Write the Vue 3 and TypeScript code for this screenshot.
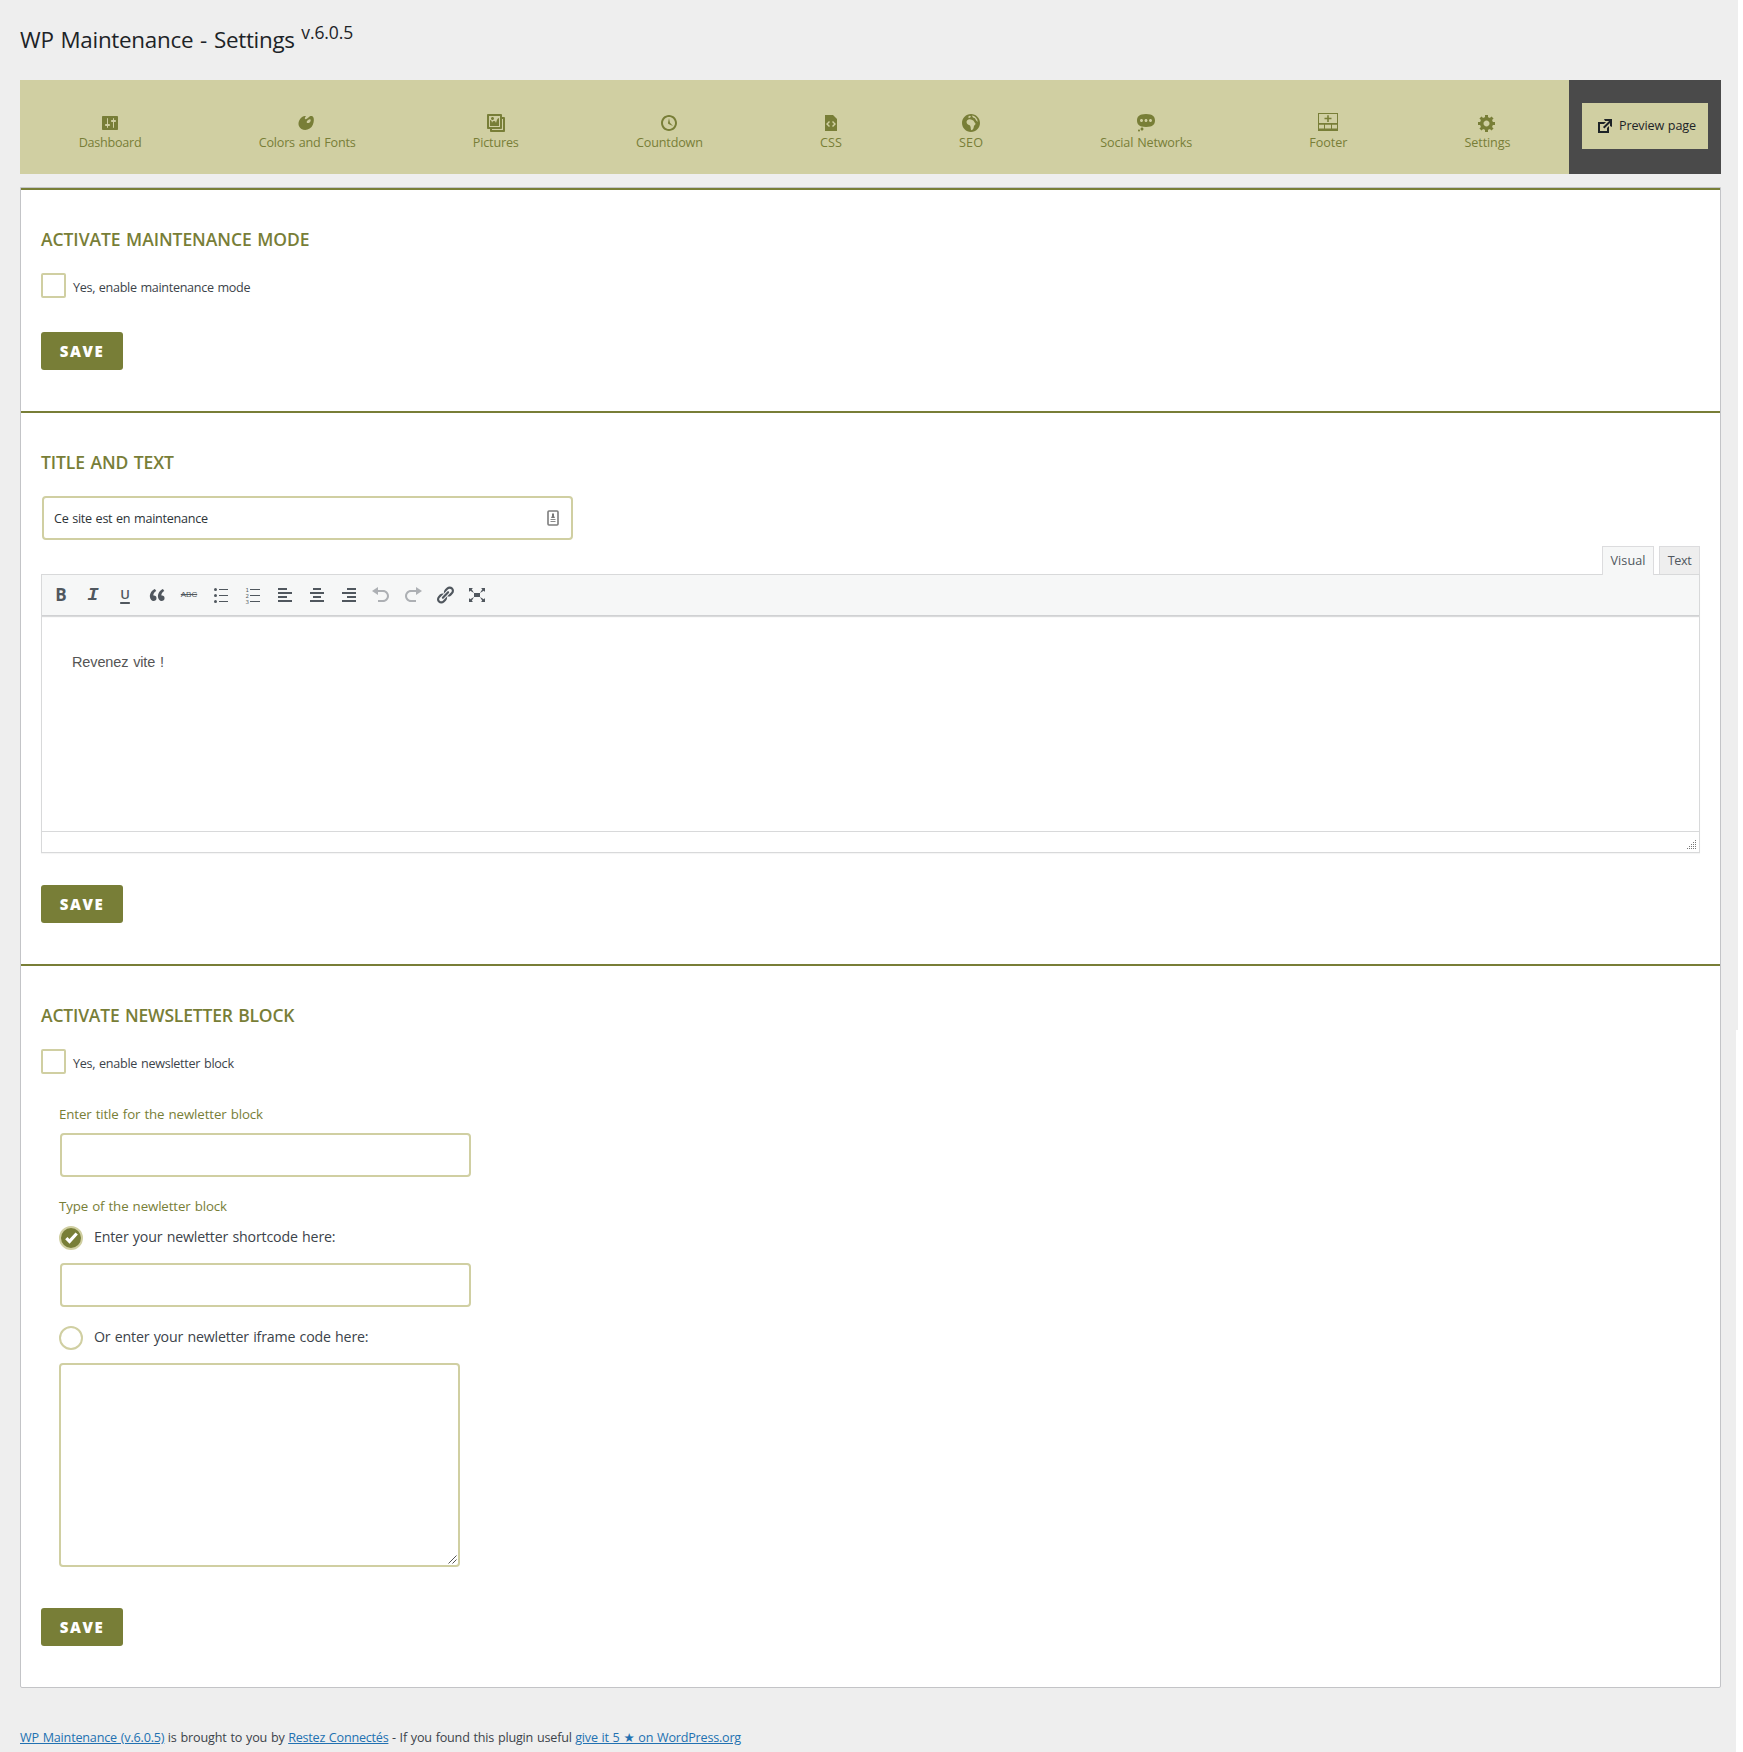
<script setup lang="ts">
import { ref } from 'vue'

interface NavItem {
  label: string
  width: number
  icon: string
}

/* Tightens or loosens tracking so that a label fills its intended measure. */
const vFit = {
  mounted(el: HTMLElement, binding: { value: number }) {
    const count = (el.textContent ?? '').trim().length
    const natural = el.getBoundingClientRect().width
    if (count > 1) {
      el.style.letterSpacing = `${((binding.value - natural) / (count - 1)).toFixed(3)}px`
    }
  },
}

const navItems: NavItem[] = [
  { label: 'Dashboard', width: 63, icon: 'M18 16V4c0-.55-.45-1-1-1H3c-.55 0-1 .45-1 1v12c0 .55.45 1 1 1h14c.55 0 1-.45 1-1zM8 11h1c.55 0 1 .45 1 1s-.45 1-1 1H8v1.5c0 .28-.22.5-.5.5s-.5-.22-.5-.5V13H6c-.55 0-1-.45-1-1s.45-1 1-1h1V5.5c0-.28.22-.5.5-.5s.5.22.5.5V11zm5-2h-1c-.55 0-1-.45-1-1s.45-1 1-1h1V5.5c0-.28.22-.5.5-.5s.5.22.5.5V7h1c.55 0 1 .45 1 1s-.45 1-1 1h-1v5.5c0 .28-.22.5-.5.5s-.5-.22-.5-.5V9z' },
  { label: 'Colors and Fonts', width: 97, icon: 'M8.55 3.06c1.01.34-1.95 2.01-.1 3.13 1.04.63 3.31-2.22 4.45-2.86.97-.54 2.67-.65 3.53 1.23 1.09 2.38.14 8.57-3.79 11.06-3.97 2.5-8.97 1.23-10.7-2.66-2.01-4.53 3.12-11.09 6.61-9.9zm1.21 6.45c.73 1.64 4.7-.5 3.79-2.8-.59-1.49-4.48 1.25-3.79 2.8z' },
  { label: 'Pictures', width: 46, icon: 'M16 4h1.96c.57 0 1.04.47 1.04 1.04v12.92c0 .57-.47 1.04-1.04 1.04H5.04C4.47 19 4 18.53 4 17.96V16H2.04C1.47 16 1 15.53 1 14.96V2.04C1 1.47 1.47 1 2.04 1h12.92c.57 0 1.04.47 1.04 1.04V4zM3 14h11V3H3v11zm5-8.5C8 4.67 7.33 4 6.5 4S5 4.67 5 5.5 5.67 7 6.5 7 8 6.33 8 5.5zm2 4.5s1-5 3-5v8H4V7c2 0 2 3 2 3s.33-2 2-2 2 2 2 2zm7 7V6h-1v8.96c0 .57-.47 1.04-1.04 1.04H6v1h11z' },
  { label: 'Countdown', width: 67, icon: 'M10 2c4.42 0 8 3.58 8 8s-3.58 8-8 8-8-3.58-8-8 3.58-8 8-8zm0 14c3.31 0 6-2.69 6-6s-2.69-6-6-6-6 2.69-6 6 2.69 6 6 6zm-.71-5.29c.07.05.14.1.23.15l-.02.02L14 13l-3.03-3.19L10 5l-.97 4.81h.01c0 .02-.01.05-.02.09S9 9.97 9 10c0 .28.1.52.29.71z' },
  { label: 'CSS', width: 22, icon: 'M12 2l4 4v12H4V2h8zM9 13l-2-2 2-2-1-1-3 3 3 3zm3 1l3-3-3-3-1 1 2 2-2 2z' },
  { label: 'SEO', width: 24, icon: 'M10 1c-4.970 0-9 4.030-9 9s4.030 9 9 9 9-4.030 9-9-4.030-9-9-9zM5.600 8.300C6.500 6.700 8 6.200 9.500 6.400c1.800.2 3 .8 3.700 2.300.4.9 1.600 1.500 1.300 2.400-.4 1-1.500 1.500-1.700 2.600-.2 1.500-.9 3.300-2.300 3.600-.9-.5-.7-2-.9-3.200-.2-.9-.6-1.800-1.600-2.100-1.500-.3-2.700-1.500-2.400-3.700zM7 3.900l1.500-1.200 1.400.5-.6 1.200-1.300.6zM10.800 2.600l2.200.5 1.900 1.500 1.400 2 .4 2.400-1.500-1.500-1.300-2.200-1.900-.8z' },
  { label: 'Social Networks', width: 92, icon: 'M10 1c7 0 9 2.91 9 6.5S17 14 10 14s-9-2.91-9-6.5S3 1 10 1zM5.5 9C6.33 9 7 8.33 7 7.5S6.33 6 5.5 6 4 6.67 4 7.5 4.67 9 5.5 9zM10 9c.83 0 1.5-.67 1.5-1.5S10.83 6 10 6s-1.5.67-1.5 1.5S9.17 9 10 9zm4.5 0c.83 0 1.5-.67 1.5-1.5S15.33 6 14.5 6 13 6.67 13 7.5 13.67 9 14.5 9zM6 14.5c.83 0 1.5.67 1.5 1.5s-.67 1.5-1.5 1.5-1.5-.67-1.5-1.5.67-1.5 1.5-1.5zm-3 2c.55 0 1 .45 1 1s-.45 1-1 1-1-.45-1-1 .45-1 1-1z' },
  { label: 'Footer', width: 38, icon: 'M0 0h20v18H0zM1 1v9h18V1zM1 11.700v3.800h5v-3.800zM7 11.700v3.800h6v-3.800zM14 11.700v3.800h5v-3.800zM9.200 2.200h1.600v2.600h2.700v1.500h-2.700v2.600H9.200V6.300H6.500V4.800h2.700z' },
  { label: 'Settings', width: 46, icon: 'M18 12h-2.18c-.17.7-.44 1.35-.81 1.93l1.54 1.54-2.1 2.1-1.54-1.54c-.58.36-1.23.63-1.91.79V19H8v-2.18c-.68-.16-1.33-.43-1.91-.79l-1.54 1.54-2.12-2.12 1.54-1.54c-.36-.58-.63-1.23-.79-1.91H1V9.030h2.170c.16-.7.44-1.35.8-1.94L2.430 5.550l2.1-2.1 1.54 1.54c.58-.37 1.24-.64 1.93-.81V2h3v2.180c.68.16 1.33.43 1.91.79l1.54-1.54 2.12 2.12-1.54 1.54c.36.59.64 1.24.8 1.94H18V12zm-8.500 1.500c1.66 0 3-1.34 3-3s-1.34-3-3-3-3 1.34-3 3 1.34 3 3 3z' },
]

const siteTitle = ref('Ce site est en maintenance')
</script>

<template>
  <div class="page">
    <h1 class="title">
      <span v-fit="275" class="fit">WP Maintenance - Settings</span>
      <span v-fit="52" class="fit version">v.6.0.5</span>
    </h1>

    <div class="bar">
      <nav class="nav">
        <a v-for="item in navItems" :key="item.label" class="nav-item" :style="{ width: item.width + 'px' }">
          <svg class="icon" viewBox="0 0 20 20"><path :d="item.icon" fill-rule="evenodd" /></svg>
          <span v-fit="item.width" class="fit">{{ item.label }}</span>
        </a>
      </nav>
      <div class="preview">
        <a class="preview-button">
          <svg class="icon" viewBox="0 0 20 20"><path d="M9 3h8v8l-2-1V6.920l-5.600 5.590-1.410-1.410L14.080 5H10zm3 12v-3l2-2v7H3V6h8L9 8H5v7h7z" /></svg>
          <span v-fit="77" class="fit">Preview page</span>
        </a>
      </div>
    </div>

    <main class="panel">
      <section class="section">
        <h2 class="heading"><span v-fit="268.500" class="fit">ACTIVATE MAINTENANCE MODE</span></h2>
        <label class="check">
          <i class="box"></i>
          <span v-fit="177.500" class="fit">Yes, enable maintenance mode</span>
        </label>
        <button class="save first"><span v-fit="43" class="fit">SAVE</span></button>
      </section>

      <section class="section">
        <h2 class="heading"><span v-fit="133" class="fit">TITLE AND TEXT</span></h2>
        <div class="field site-title">
          <span v-fit="154" class="fit">{{ siteTitle }}</span>
          <svg class="autofill" viewBox="0 0 12 16">
            <rect x="1" y="1" width="10" height="14" rx="1" fill="#fff" stroke="#7d7d7d" stroke-width="1.600" />
            <path d="M5 3.500h2v2.500l1 2H4l1-2z" fill="#777" />
            <path d="M3.500 9h5v1h-5zM3.500 11h5v1h-5z" fill="#8a8a8a" />
          </svg>
        </div>

        <div class="tabs">
          <span class="tab active"><span v-fit="35" class="fit">Visual</span></span>
          <span class="tab second"><span v-fit="24" class="fit">Text</span></span>
        </div>
        <div class="editor">
          <div class="toolbar">
            <span class="tool bold">B</span>
            <span class="tool italic">I</span>
            <span class="tool underline">U</span>
            <svg class="tool" viewBox="0 0 20 20"><path d="M9.490 13.220c0-.74-.2-1.380-.61-1.900-.62-.78-1.830-.88-2.530-.72-.29-1.650 1.110-3.750 2.920-4.650L7.880 4c-2.730 1.300-5.420 4.280-4.960 8.050C3.210 14.430 4.590 16 6.540 16c.85 0 1.560-.25 2.120-.75s.83-1.180.83-2.030zm8.050 0c0-.74-.2-1.380-.61-1.900-.63-.78-1.830-.88-2.530-.72-.29-1.650 1.110-3.750 2.920-4.650L15.930 4c-2.730 1.300-5.410 4.280-4.950 8.050.29 2.380 1.660 3.950 3.610 3.950.85 0 1.560-.25 2.120-.75s.83-1.180.83-2.030z" /></svg>
            <span class="tool strike">ABC</span>
            <svg class="tool" viewBox="0 0 20 20"><circle cx="4.500" cy="4.500" r="1.500" /><circle cx="4.500" cy="10.500" r="1.500" /><circle cx="4.500" cy="16.500" r="1.500" /><path d="M8 4h9v1H8zM8 10h9v1H8zM8 16h9v1H8z" /></svg>
            <svg class="tool" viewBox="0 0 20 20"><path d="M7 4h10v1H7zM7 10h10v1H7zM7 16h10v1H7z" /><text x="2.500" y="6.500">1</text><text x="2.500" y="12.500">2</text><text x="2.500" y="18.500">3</text></svg>
            <svg class="tool" viewBox="0 0 20 20"><path d="M12 5V3H3v2h9zm5 4V7H3v2h14zm-5 4v-2H3v2h9zm5 4v-2H3v2h14z" /></svg>
            <svg class="tool" viewBox="0 0 20 20"><path d="M14 5V3H6v2h8zm3 4V7H3v2h14zm-3 4v-2H6v2h8zm3 4v-2H3v2h14z" /></svg>
            <svg class="tool" viewBox="0 0 20 20"><path d="M17 5V3H8v2h9zm0 4V7H3v2h14zm0 4v-2H8v2h9zm0 4v-2H3v2h14z" /></svg>
            <svg class="tool off" viewBox="0 0 20 20"><path d="M12 5H7V2L1 6l6 4V7h5c2.200 0 4 1.800 4 4s-1.800 4-4 4H7v2h5c3.300 0 6-2.700 6-6s-2.700-6-6-6z" /></svg>
            <svg class="tool off" viewBox="0 0 20 20"><path d="M8 5h5V2l6 4-6 4V7H8c-2.200 0-4 1.800-4 4s1.800 4 4 4h5v2H8c-3.300 0-6-2.700-6-6s2.700-6 6-6z" /></svg>
            <svg class="tool" viewBox="0 0 20 20"><path d="M17.740 2.760c1.680 1.690 1.680 4.410 0 6.100l-1.530 1.520c-1.120 1.120-2.700 1.470-4.140 1.090l2.620-2.610.76-.77.76-.76c.84-.84.84-2.200 0-3.040-.84-.85-2.200-.85-3.040 0l-.77.76-3.380 3.380c-.37-1.440-.02-3.020 1.100-4.140l1.520-1.530c1.690-1.680 4.420-1.680 6.100 0zM8.590 13.430l5.340-5.340c.42-.42.42-1.100 0-1.520-.44-.43-1.130-.39-1.530 0l-5.330 5.340c-.42.42-.42 1.100 0 1.520.44.43 1.130.39 1.520 0zm-.76 2.290l4.140-4.150c.38 1.440.03 3.020-1.090 4.140l-1.520 1.530c-1.690 1.680-4.410 1.680-6.100 0-1.680-1.680-1.680-4.420 0-6.100l1.530-1.520c1.120-1.120 2.700-1.470 4.140-1.100l-4.140 4.150c-.85.84-.85 2.200 0 3.050.84.84 2.200.84 3.040 0z" /></svg>
            <svg class="tool" viewBox="0 0 20 20"><path d="M7 8h6v4H7zm-5 5v4h4l-1.200-1.200L7 12l-3.800 2.200M14 17h4v-4l-1.200 1.200L13 12l2.200 3.800M14 3l1.300 1.300L13 8l3.800-2.200L18 7V3M6 3H2v4l1.200-1.200L7 8 4.700 4.300" /></svg>
          </div>
          <div class="content"><span v-fit="92" class="fit">Revenez vite !</span></div>
          <div class="status">
            <svg class="grip" viewBox="0 0 10 10"><path d="M9 0h1v1H9zM7 2h1v1H7zM9 2h1v1H9zM5 4h1v1H5zM7 4h1v1H7zM9 4h1v1H9zM3 6h1v1H3zM5 6h1v1H5zM7 6h1v1H7zM9 6h1v1H9zM1 8h1v1H1zM3 8h1v1H3zM5 8h1v1H5zM7 8h1v1H7zM9 8h1v1H9z" /></svg>
          </div>
        </div>
        <button class="save second"><span v-fit="43" class="fit">SAVE</span></button>
      </section>

      <section class="section">
        <h2 class="heading"><span v-fit="253.500" class="fit">ACTIVATE NEWSLETTER BLOCK</span></h2>
        <label class="check">
          <i class="box"></i>
          <span v-fit="161" class="fit">Yes, enable newsletter block</span>
        </label>
        <div class="newsletter">
          <div class="label"><span v-fit="204" class="fit">Enter title for the newletter block</span></div>
          <div class="field narrow"></div>
          <div class="label type"><span v-fit="168" class="fit">Type of the newletter block</span></div>
          <label class="radio">
            <svg viewBox="0 0 24 24">
              <circle cx="12" cy="12" r="11" fill="#787e37" stroke="#d0cfa2" stroke-width="2" />
              <path d="M7.300 12.200l3.200 3.200 7.200-7.900" fill="none" stroke="#fff" stroke-width="3.200" />
            </svg>
            <span v-fit="241.500" class="fit">Enter your newletter shortcode here:</span>
          </label>
          <div class="field narrow"></div>
          <label class="radio iframe">
            <svg viewBox="0 0 24 24"><circle cx="12" cy="12" r="11" fill="#fff" stroke="#d0cfa2" stroke-width="2" /></svg>
            <span v-fit="274.500" class="fit">Or enter your newletter iframe code here:</span>
          </label>
          <div class="area">
            <svg viewBox="0 0 9 9"><path d="M.5 8.500l8-8M4.500 8.500l4-4" /></svg>
          </div>
        </div>
        <button class="save third"><span v-fit="43" class="fit">SAVE</span></button>
      </section>
    </main>

    <footer class="credits">
      <a v-fit="144.500" class="fit">WP Maintenance (v.6.0.5)</a>
      <span v-fit="117" class="fit">is brought to you by</span>
      <a v-fit="100.500" class="fit">Restez Connectés</a>
      <span v-fit="180" class="fit">- If you found this plugin useful</span>
      <a v-fit="166" class="fit">give it 5 ★ on WordPress.org</a>
    </footer>
  </div>
</template>

<style>
body {
  background: #fff;
}
</style>

<style scoped>
.page {
  box-sizing: border-box;
  width: 1743px;
  height: 1752px;
  overflow: hidden;
  padding: 25px 22px 0 20px;
  background:
    linear-gradient(#eee, #eee) 0 0 / 1738px 1030px no-repeat,
    linear-gradient(#eee, #eee) 0 0 / 1736px 1752px no-repeat,
    #fff;
  font-family: "Open Sans", "Noto Sans", "DejaVu Sans", sans-serif;
  font-size: 12.6px;
  color: #3c434a;
}

.fit {
  display: inline-block;
  white-space: nowrap;
  word-spacing: 0.06em;
}

.title {
  display: flex;
  gap: 6.500px;
  margin: 0;
  height: 30px;
  font-size: 22.4px;
  line-height: 30px;
  font-weight: 400;
  color: #1d2327;
}

.version {
  font-size: 17.5px;
  line-height: 15px;
}

.bar {
  display: flex;
  width: 1701px;
  height: 94px;
  margin-top: 25px;
}

.nav {
  box-sizing: border-box;
  flex: 1;
  display: flex;
  justify-content: space-around;
  padding-top: 33px;
  background: #d0cfa2;
  color: #787e37;
}

.nav-item {
  display: flex;
  flex-direction: column;
  align-items: center;
  line-height: 20px;
}

.icon {
  width: 20px;
  height: 20px;
  flex: none;
  fill: currentColor;
}

.preview {
  box-sizing: border-box;
  width: 152px;
  padding: 23px 13px;
  background: #4a4a4a;
}

.preview-button {
  box-sizing: border-box;
  display: flex;
  align-items: center;
  gap: 4px;
  height: 46px;
  padding-left: 13px;
  background: #d0cfa2;
  color: #1d2327;
  line-height: 18px;
}

.preview,
.preview-button {
  flex: none;
}

.panel {
  box-sizing: border-box;
  width: 1701px;
  margin-top: 13px;
  border: 1px solid #c3c4c7;
  border-radius: 0 0 2px 2px;
  background: #fff;
}

.section {
  display: flex;
  flex-direction: column;
  align-items: flex-start;
  padding: 37px 20px 41px;
  border-top: 2px solid #787e37;
}

.heading {
  margin: 0;
  font-size: 17.5px;
  line-height: 25px;
  font-weight: 600;
  color: #787e37;
}

.check {
  display: flex;
  gap: 7px;
  height: 25px;
  margin-top: 21px;
}

.check span {
  line-height: 18px;
  margin-top: 6px;
}

.box {
  box-sizing: border-box;
  width: 25px;
  height: 25px;
  border: 2px solid #d0cfa2;
  border-radius: 2px;
}

.save {
  width: 82px;
  height: 38px;
  padding: 0;
  border: 0;
  border-radius: 3px;
  background: #787e37;
  color: #fff;
  font: 800 15px/38px "Open Sans", "Noto Sans", sans-serif;
}

.save.first {
  margin-top: 34px;
}

.save.second {
  margin-top: 32px;
}

.save.third {
  margin-top: 41px;
}

.field {
  box-sizing: border-box;
  height: 44px;
  border: 2px solid #d0cfa2;
  border-radius: 4px;
  background: #fff;
}

.site-title {
  display: flex;
  align-items: center;
  justify-content: space-between;
  width: 531px;
  margin: 21px 0 0 1px;
  padding: 0 12px 0 10px;
  color: #2c3338;
}

.autofill {
  width: 12px;
  height: 16px;
}

.tabs {
  display: flex;
  align-self: flex-end;
  gap: 5px;
  height: 28px;
  margin-top: 6px;
}

.tab {
  box-sizing: border-box;
  height: 28px;
  border: 1px solid #dcdcde;
  border-bottom: 0;
  background: #eee;
  color: #50575e;
  line-height: 28px;
  text-align: center;
}

.tab.active {
  position: relative;
  width: 52px;
  height: 29px;
  background: #f6f7f7;
}

.tab.second {
  width: 41px;
}

.editor {
  box-sizing: border-box;
  align-self: stretch;
  height: 279px;
  border: 1px solid #d8d9da;
  box-shadow: 0 1px 1px rgba(0, 0, 0, 0.04);
}

.toolbar {
  box-sizing: border-box;
  display: flex;
  align-items: center;
  gap: 12px;
  height: 41px;
  padding-left: 9px;
  background: #f6f7f7;
  border-bottom: 1px solid #d0d1d3;
  box-shadow: 0 1px 1px #d9dadb;
}

.tool {
  width: 20px;
  height: 20px;
  flex: none;
  fill: #50575e;
  color: #50575e;
  line-height: 20px;
  text-align: center;
}

.tool text {
  font: 5.500px "DejaVu Sans", sans-serif;
}

.tool.off {
  fill: #adb0b4;
}

.bold {
  font: 700 17px/20px "Open Sans", sans-serif;
}

.italic {
  font: italic 700 19px/21px "Liberation Mono", monospace;
}

.underline {
  font: 600 13px/18px "Open Sans", sans-serif;
  text-decoration: underline 2px;
  text-underline-offset: 3px;
}

.strike {
  font: 400 8px/20px "Liberation Sans", sans-serif;
  text-decoration: line-through 1px;
}

.content {
  box-sizing: border-box;
  height: 216px;
  padding: 36px 0 0 30px;
  border-bottom: 1px solid #d8d9da;
  font: 14.500px/20px "Liberation Sans", Arial, sans-serif;
  color: #555;
}

.status {
  display: flex;
  justify-content: flex-end;
  padding: 8px 3px 0 0;
}

.grip {
  width: 10px;
  height: 10px;
  fill: #777;
}

.newsletter {
  margin: 30px 0 0 18px;
}

.label {
  height: 20px;
  margin-bottom: 9px;
  font-size: 13.300px;
  line-height: 20px;
  color: #787e37;
}

.label.type {
  margin: 19px 0 10px;
}

.narrow {
  width: 411px;
  margin-left: 1px;
}

.radio {
  display: flex;
  gap: 11px;
  height: 24px;
  margin-bottom: 13px;
  font-size: 14.200px;
  line-height: 21px;
}

.radio svg {
  width: 24px;
  height: 24px;
}

.radio.iframe {
  margin-top: 19px;
}

.area {
  box-sizing: border-box;
  display: flex;
  align-items: flex-end;
  justify-content: flex-end;
  width: 401px;
  height: 204px;
  padding: 1px;
  border: 2px solid #d0cfa2;
  border-radius: 4px;
}

.area svg {
  width: 9px;
  height: 9px;
  fill: none;
  stroke: #555;
}

.credits {
  display: flex;
  gap: 3.500px;
  margin-top: 40px;
  line-height: 20px;
}

.credits a {
  color: #2271b1;
  text-decoration: underline;
}
</style>
